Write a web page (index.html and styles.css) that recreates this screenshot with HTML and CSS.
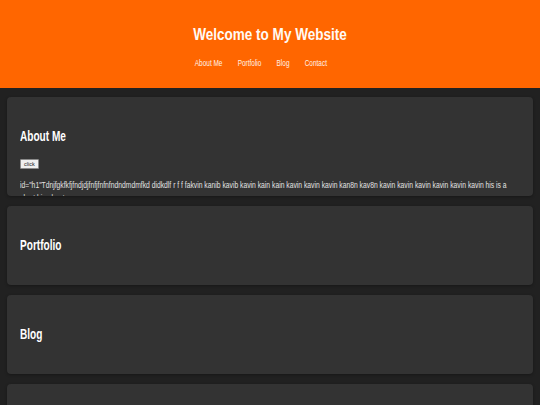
FILE: index.html
```html
<!DOCTYPE html>
<html lang="en">
<head>
<meta charset="utf-8">
<title>My Website</title>
<link rel="stylesheet" href="styles.css">
</head>
<body>
<header class="site-header">
  <h1 class="site-title">Welcome to My Website</h1>
  <nav class="site-nav">
    <a href="#about">About Me</a>
    <a href="#portfolio">Portfolio</a>
    <a href="#blog">Blog</a>
    <a href="#contact">Contact</a>
  </nav>
</header>
<main class="content">
  <section class="card card-about" id="about">
    <h2 class="card-title">About Me</h2>
    <button class="click-btn" type="button">click</button>
    <p class="bio">id="h1"Tdnjfgkfkfjfndjdjfnfjfnfnfndndmdmfkd didkdlf r f f fakvin kanib kavib kavin kain kain kavin kavin kavin kan8n kav8n kavin kavin kavin kavin kavin kavin his is a short bio about me.</p>
  </section>
  <section class="card" id="portfolio">
    <h2 class="card-title">Portfolio</h2>
  </section>
  <section class="card" id="blog">
    <h2 class="card-title">Blog</h2>
  </section>
  <section class="card" id="contact">
    <h2 class="card-title">Contact</h2>
  </section>
</main>
</body>
</html>
```

FILE: styles.css
```css
html, body {
  margin: 0;
  padding: 0;
}
body {
  background: #212121;
  color: #ffffff;
  font-family: "Liberation Sans", Arial, sans-serif;
}
.site-header {
  background: #ff6600;
  height: 88px;
  box-sizing: border-box;
  padding-top: 24px;
  text-align: center;
}
.site-title {
  margin: 0;
  font-size: 16.5px;
  line-height: 20px;
  font-weight: bold;
  color: #fffaf4;
  transform: scaleX(0.82);
  transform-origin: 50% 50%;
}
.site-nav {
  margin-top: 13px;
  display: flex;
  justify-content: center;
  gap: 20px;
  padding-right: 24px;
  line-height: 12px;
  transform: scaleX(0.76);
  transform-origin: 50% 50%;
}
.site-nav a {
  color: #fff3e8;
  text-decoration: none;
  font-size: 8.5px;
}
.content {
  display: flex;
  flex-direction: column;
  gap: 10px;
  padding: 9px 7px;
}
.card {
  background: #333333;
  border-radius: 4px;
  padding: 10px 13px;
  height: 59px;
  overflow: hidden;
  box-shadow: 0 1px 3px rgba(0,0,0,0.3);
}
.card-about {
  height: 79px;
}
.card-title {
  margin: 20px 0;
  font-size: 14px;
  line-height: 19px;
  font-weight: bold;
  color: #ffffff;
  transform: scaleX(0.72);
  transform-origin: 0 50%;
}
.card-about .card-title {
  margin-bottom: 13px;
}
.click-btn {
  display: block;
  margin: 0;
  padding: 0 3px;
  height: 10px;
  font-family: "Liberation Sans", Arial, sans-serif;
  font-size: 5.5px;
  line-height: 8px;
  color: #222;
  background: #efefef;
  border: 1px solid #8a8a8a;
  border-radius: 1px;
}
.bio {
  margin: 9px 0 0;
  width: 695px;
  font-size: 9.5px;
  line-height: 13px;
  color: #e2e2e2;
  transform: scaleX(0.712);
  transform-origin: 0 0;
}
```
